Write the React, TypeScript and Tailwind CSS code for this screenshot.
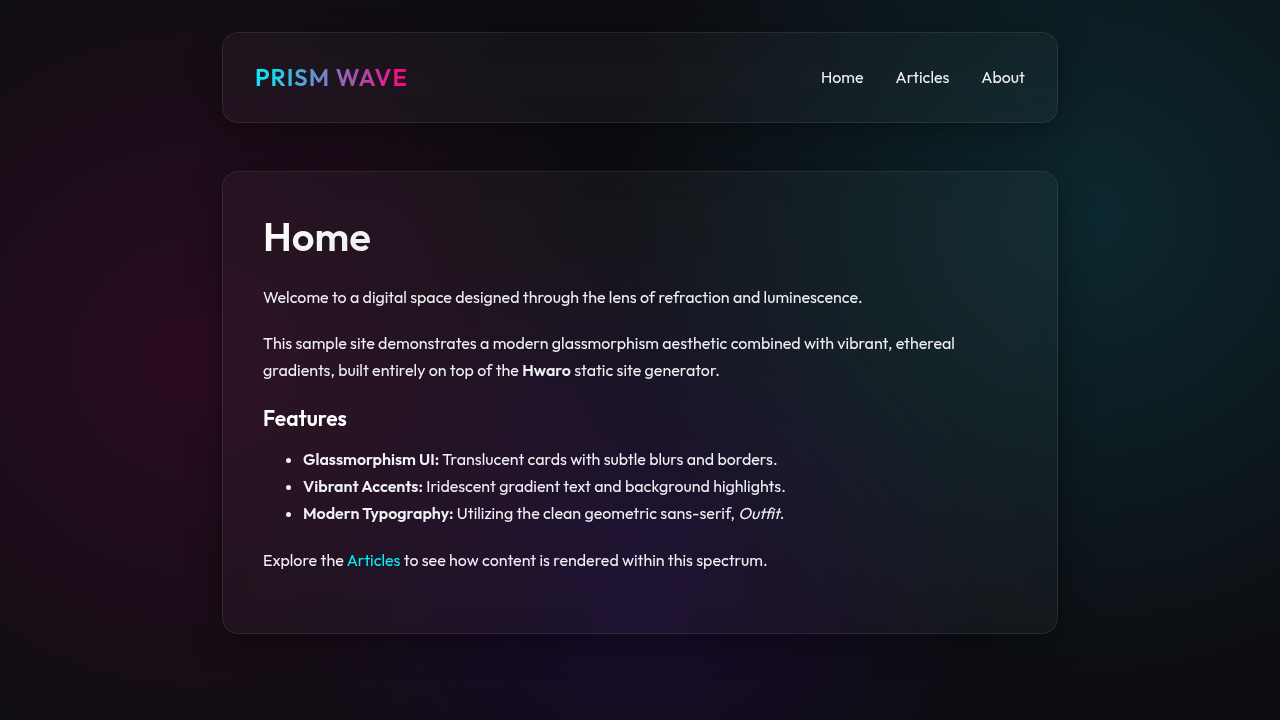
import React from "react";

const navLinks = [
  { id: 1, label: "Home", href: "#home" },
  { id: 2, label: "Articles", href: "#articles" },
  { id: 3, label: "About", href: "#about" },
];

const features = [
  { id: 1, title: "Glassmorphism UI:", text: "Translucent cards with subtle blurs and borders." },
  { id: 2, title: "Vibrant Accents:", text: "Iridescent gradient text and background highlights." },
  {
    id: 3,
    title: "Modern Typography:",
    text: (
      <>
        Utilizing the clean geometric sans-serif, <em>Outfit</em>.
      </>
    ),
  },
];

const glass =
  "rounded-2xl border border-white/8 bg-white/3 shadow-[0_8px_32px_rgba(0,0,0,0.37)] backdrop-blur-[16px]";

export default function App() {
  return (
    <div className="min-h-screen bg-[#0d0d12] bg-[radial-gradient(circle_at_15%_50%,rgba(255,0,128,0.12),transparent_40%),radial-gradient(circle_at_85%_30%,rgba(0,240,255,0.12),transparent_40%),radial-gradient(circle_at_50%_80%,rgba(112,0,255,0.12),transparent_40%)] font-['Outfit','Lato',sans-serif] text-base leading-[27px] text-[#f0f0f5]">
      <div className="mx-auto max-w-[900px] p-8">
        {/* Header */}
        <header className={`mb-12 flex items-center justify-between px-8 py-6 ${glass}`}>
          <a
            href="#home"
            className="bg-linear-to-r/srgb from-[#00f0ff] to-[#ff0080] bg-clip-text text-2xl leading-[41px] font-semibold tracking-[1px] text-transparent"
          >
            PRISM WAVE
          </a>
          <nav className="flex gap-8">
            {navLinks.map((link) => (
              <a key={link.id} href={link.href}>
                {link.label}
              </a>
            ))}
          </nav>
        </header>

        {/* Content */}
        <main className={`p-10 ${glass}`}>
          <h1 className="mb-6 bg-[linear-gradient(135deg,#ffffff,#a0a0b0)] bg-clip-text text-[40px] leading-[48px] font-semibold text-transparent">
            Home
          </h1>
          <p className="mb-[19px]">
            Welcome to a digital space designed through the lens of refraction and luminescence.
          </p>
          <p className="mb-[19px]">
            This sample site demonstrates a modern glassmorphism aesthetic combined with vibrant, ethereal
            gradients, built entirely on top of the <strong className="font-semibold">Hwaro</strong> static site
            generator.
          </p>
          <h3 className="mb-[13px] text-[21px] leading-[30px] font-semibold text-white">Features</h3>
          <ul className="mb-5 list-disc pl-10">
            {features.map((feature) => (
              <li key={feature.id}>
                <strong className="font-semibold">{feature.title}</strong> {feature.text}
              </li>
            ))}
          </ul>
          <p className="mb-[19px]">
            Explore the{" "}
            <a href="#articles" className="text-[#00f0ff]">
              Articles
            </a>{" "}
            to see how content is rendered within this spectrum.
          </p>
        </main>
      </div>
    </div>
  );
}
